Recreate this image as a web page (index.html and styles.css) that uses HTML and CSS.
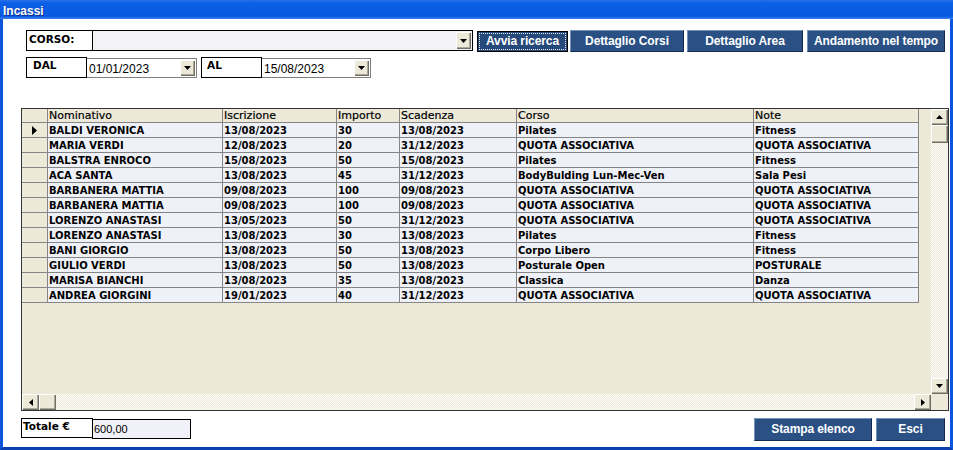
FILE: index.html
```html
<!DOCTYPE html>
<html>
<head>
<meta charset="utf-8">
<title>Incassi</title>
<link rel="stylesheet" href="styles.css">
</head>
<body>
<div class="window">
  <div class="titlebar">Incassi</div>
  <div class="client">
    <div class="row1">
      <div class="label label-corso">CORSO:</div>
      <div class="combo combo-corso">
        <span class="combo-text"></span>
        <span class="dd"><svg width="7" height="4" viewBox="0 0 7 4"><polygon points="0,0 7,0 3.5,4" fill="#000"/></svg></span>
      </div>
      <button class="btn btn-primary w-avvia"><span class="focus">Avvia ricerca</span></button>
      <button class="btn w-corsi">Dettaglio Corsi</button>
      <button class="btn w-area">Dettaglio Area</button>
      <button class="btn w-andamento">Andamento nel tempo</button>
    </div>
    <div class="row2">
      <div class="label label-dal">DAL</div>
      <div class="combo combo-date w-dal">
        <span class="combo-text">01/01/2023</span>
        <span class="dd"><svg width="7" height="4" viewBox="0 0 7 4"><polygon points="0,0 7,0 3.5,4" fill="#000"/></svg></span>
      </div>
      <div class="label label-al">AL</div>
      <div class="combo combo-date w-al">
        <span class="combo-text">15/08/2023</span>
        <span class="dd"><svg width="7" height="4" viewBox="0 0 7 4"><polygon points="0,0 7,0 3.5,4" fill="#000"/></svg></span>
      </div>
    </div>

    <div class="grid">
      <div class="table">
        <div class="tr head">
          <div class="td c0"></div>
          <div class="td c1">Nominativo</div>
          <div class="td c2">Iscrizione</div>
          <div class="td c3">Importo</div>
          <div class="td c4">Scadenza</div>
          <div class="td c5">Corso</div>
          <div class="td c6">Note</div>
        </div>
        <div class="tr">
          <div class="td c0"><svg class="cur" width="5" height="9" viewBox="0 0 5 9"><polygon points="0,0 5,4.5 0,9" fill="#000"/></svg></div>
          <div class="td c1">BALDI VERONICA</div><div class="td c2">13/08/2023</div><div class="td c3">30</div><div class="td c4">13/08/2023</div><div class="td c5">Pilates</div><div class="td c6">Fitness</div>
        </div>
        <div class="tr">
          <div class="td c0"></div>
          <div class="td c1">MARIA VERDI</div><div class="td c2">12/08/2023</div><div class="td c3">20</div><div class="td c4">31/12/2023</div><div class="td c5">QUOTA ASSOCIATIVA</div><div class="td c6">QUOTA ASSOCIATIVA</div>
        </div>
        <div class="tr">
          <div class="td c0"></div>
          <div class="td c1">BALSTRA ENROCO</div><div class="td c2">15/08/2023</div><div class="td c3">50</div><div class="td c4">15/08/2023</div><div class="td c5">Pilates</div><div class="td c6">Fitness</div>
        </div>
        <div class="tr">
          <div class="td c0"></div>
          <div class="td c1">ACA SANTA</div><div class="td c2">13/08/2023</div><div class="td c3">45</div><div class="td c4">31/12/2023</div><div class="td c5">BodyBulding Lun-Mec-Ven</div><div class="td c6">Sala Pesi</div>
        </div>
        <div class="tr">
          <div class="td c0"></div>
          <div class="td c1">BARBANERA MATTIA</div><div class="td c2">09/08/2023</div><div class="td c3">100</div><div class="td c4">09/08/2023</div><div class="td c5">QUOTA ASSOCIATIVA</div><div class="td c6">QUOTA ASSOCIATIVA</div>
        </div>
        <div class="tr">
          <div class="td c0"></div>
          <div class="td c1">BARBANERA MATTIA</div><div class="td c2">09/08/2023</div><div class="td c3">100</div><div class="td c4">09/08/2023</div><div class="td c5">QUOTA ASSOCIATIVA</div><div class="td c6">QUOTA ASSOCIATIVA</div>
        </div>
        <div class="tr">
          <div class="td c0"></div>
          <div class="td c1">LORENZO ANASTASI</div><div class="td c2">13/05/2023</div><div class="td c3">50</div><div class="td c4">31/12/2023</div><div class="td c5">QUOTA ASSOCIATIVA</div><div class="td c6">QUOTA ASSOCIATIVA</div>
        </div>
        <div class="tr">
          <div class="td c0"></div>
          <div class="td c1">LORENZO ANASTASI</div><div class="td c2">13/08/2023</div><div class="td c3">30</div><div class="td c4">13/08/2023</div><div class="td c5">Pilates</div><div class="td c6">Fitness</div>
        </div>
        <div class="tr">
          <div class="td c0"></div>
          <div class="td c1">BANI GIORGIO</div><div class="td c2">13/08/2023</div><div class="td c3">50</div><div class="td c4">13/08/2023</div><div class="td c5">Corpo Libero</div><div class="td c6">Fitness</div>
        </div>
        <div class="tr">
          <div class="td c0"></div>
          <div class="td c1">GIULIO VERDI</div><div class="td c2">13/08/2023</div><div class="td c3">50</div><div class="td c4">13/08/2023</div><div class="td c5">Posturale Open</div><div class="td c6">POSTURALE</div>
        </div>
        <div class="tr">
          <div class="td c0"></div>
          <div class="td c1">MARISA BIANCHI</div><div class="td c2">13/08/2023</div><div class="td c3">35</div><div class="td c4">13/08/2023</div><div class="td c5">Classica</div><div class="td c6">Danza</div>
        </div>
        <div class="tr">
          <div class="td c0"></div>
          <div class="td c1">ANDREA GIORGINI</div><div class="td c2">19/01/2023</div><div class="td c3">40</div><div class="td c4">31/12/2023</div><div class="td c5">QUOTA ASSOCIATIVA</div><div class="td c6">QUOTA ASSOCIATIVA</div>
        </div>
      </div>

      <div class="vscroll">
        <div class="sbtn"><svg width="7" height="4" viewBox="0 0 7 4"><polygon points="0,4 7,4 3.5,0" fill="#000"/></svg></div>
        <div class="sbtn vthumb"></div>
        <div class="track"></div>
        <div class="sbtn"><svg width="7" height="4" viewBox="0 0 7 4"><polygon points="0,0 7,0 3.5,4" fill="#000"/></svg></div>
      </div>
      <div class="hscroll">
        <div class="sbtn hb"><svg width="4" height="7" viewBox="0 0 4 7"><polygon points="4,0 4,7 0,3.5" fill="#000"/></svg></div>
        <div class="sbtn hb"></div>
        <div class="track"></div>
        <div class="sbtn hb"><svg width="4" height="7" viewBox="0 0 4 7"><polygon points="0,0 0,7 4,3.5" fill="#000"/></svg></div>
      </div>
      <div class="corner"></div>
    </div>

    <div class="footer">
      <div class="totale">
        <div class="label label-tot">Totale €</div>
        <div class="tot-value">600,00</div>
      </div>
      <div class="footer-btns">
        <button class="btn w-stampa">Stampa elenco</button>
        <button class="btn w-esci">Esci</button>
      </div>
    </div>
  </div>
</div>
</body>
</html>
```
FILE: styles.css
```css
* { box-sizing: border-box; }
html, body { margin: 0; padding: 0; }
body {
  width: 953px;
  height: 450px;
  overflow: hidden;
  background: #fff;
  font-family: "DejaVu Sans", sans-serif;
}
.window {
  width: 953px;
  height: 450px;
  display: flex;
  flex-direction: column;
}
.titlebar {
  flex: none;
  height: 19px;
  padding: 5px 0 0 3px;
  background: linear-gradient(#2a72ea 0%, #0b5ee6 15%, #0a5ce4 60%, #0756df 85%, #3f86ef 100%);
  color: #fff;
  font: bold 12px/12px "Liberation Sans", sans-serif;
  text-shadow: 1px 1px #0b2f8f;
}
.client {
  flex: 1;
  display: flex;
  flex-direction: column;
  background: #fff;
  border-left: 3px solid #0b56dc;
  border-right: 3px solid #0b56dc;
  border-bottom: 3px solid #0a3fb0;
  padding: 11px 0 0 18px;
}

/* row 1 */
.row1 {
  display: flex;
  align-items: flex-start;
  height: 22px;
  margin-left: 5px;
}
.label {
  flex: none;
  background: #fff;
  border: 1px solid #000;
  color: #000;
  font: bold 10.5px/12px "DejaVu Sans", sans-serif;
}
.label-corso { width: 67px; height: 21px; padding: 2px 0 0 2px; }
.combo {
  flex: none;
  display: flex;
  align-items: flex-start;
  justify-content: space-between;
  border: 1px solid #000;
  border-left: none;
}
.combo-corso { width: 380px; height: 21px; background: #f3f3f7; }
.dd {
  flex: none;
  width: 15px;
  height: 17px;
  margin: 1px 1px 0 0;
  background: #ece9d8;
  box-shadow: inset 1px 1px #fff, inset -1px -1px #716f64, inset -2px -2px #aca899;
  display: flex;
  align-items: center;
  justify-content: center;
}
.btn {
  flex: none;
  height: 22px;
  margin: 0;
  padding: 0;
  background: #2a5084;
  border: 1px solid;
  border-color: #7291bb #13284a #13284a #7291bb;
  color: #fff;
  font: bold 12px/18px "Liberation Sans", sans-serif;
  letter-spacing: -0.1px;
  text-align: center;
}
.btn-primary {
  height: 21px;
  margin-top: 1px;
  padding: 1px;
  border: 1px solid #000;
  background: #25497b;
}
.focus {
  display: block;
  height: 17px;
  border: 1px dotted #e8ecf4;
  line-height: 15px;
}
.w-avvia { width: 91px; margin-left: 4px; }
.w-corsi { width: 114px; margin-left: 2px; }
.w-area { width: 116px; margin-left: 3px; }
.w-andamento { width: 138px; margin-left: 4px; }

/* row 2 */
.row2 {
  display: flex;
  align-items: flex-start;
  margin: 5px 0 0 5px;
  height: 21px;
}
.label-dal { width: 61px; height: 21px; padding: 1px 0 0 6px; }
.label-al { width: 61px; height: 21px; padding: 1px 0 0 5px; margin-left: 4px; }
.combo-date {
  height: 20px;
  margin-top: 1px;
  background: #fff;
  border-color: #7f7f7f;
}
.w-dal { width: 110px; }
.w-al { width: 109px; }
.combo-text {
  padding: 2px 0 0 2px;
  font: 12px/16px "Liberation Sans", sans-serif;
  color: #000;
}
.combo-date .dd { height: 16px; }

/* grid */
.grid {
  flex: none;
  margin-top: 30px;
  width: 928px;
  height: 303px;
  border: 1px solid #333;
  background: #ece9d8;
  display: grid;
  grid-template-columns: 909px 17px;
  grid-template-rows: 285px 16px;
}
.table {
  overflow: hidden;
  background: #ece9d8;
}
.tr { display: flex; }
.td {
  flex: none;
  height: 15px;
  padding: 1px 0 0 1px;
  border-right: 1px solid #858585;
  border-bottom: 1px solid #858585;
  background: #eff1f8;
  color: #000;
  font: bold 10px/13px "DejaVu Sans", sans-serif;
  white-space: nowrap;
  overflow: hidden;
}
.head .td {
  height: 14px;
  padding-top: 1px;
  background: #ece9d8;
  font: 11px/12px "DejaVu Sans", sans-serif;
  -webkit-text-stroke: 0.2px #000;
}
.td.c0 {
  background: #ece9d8;
  display: flex;
  align-items: center;
  padding: 0 0 0 10px;
}
.c0 { width: 26px; }
.c1 { width: 175px; }
.c2 { width: 114px; }
.c3 { width: 63px; }
.c4 { width: 117px; }
.c5 { width: 237px; }
.c6 { width: 165px; }

.track {
  flex: 1;
  background: repeating-conic-gradient(#ece9d8 0 25%, #fdfdfb 0 50%) 0 0 / 2px 2px;
}
.vscroll {
  display: flex;
  flex-direction: column;
}
.hscroll {
  display: flex;
}
.sbtn {
  flex: none;
  width: 17px;
  height: 16px;
  background: #ece9d8;
  box-shadow: inset 1px 1px #fff, inset -1px -1px #716f64, inset -2px -2px #aca899;
  display: flex;
  align-items: center;
  justify-content: center;
}
.vthumb { height: 18px; }
.corner { background: #ece9d8; }

/* footer */
.footer {
  display: flex;
  justify-content: space-between;
  align-items: flex-start;
  margin-top: 7px;
  padding-right: 5px;
}
.totale { display: flex; align-items: flex-start; }
.label-tot { width: 72px; height: 20px; padding: 1px 0 0 1px; }
.tot-value {
  width: 99px;
  height: 20px;
  margin: 1px 0 0 -1px;
  border: 1px solid #000;
  background: #f1f1f9;
  padding: 2px 0 0 1px;
  font: 11px/15px "Liberation Sans", sans-serif;
  color: #000;
}
.footer-btns { display: flex; }
.w-stampa { width: 118px; height: 23px; line-height: 19px; }
.w-esci { width: 69px; height: 23px; line-height: 19px; margin-left: 4px; }
```
